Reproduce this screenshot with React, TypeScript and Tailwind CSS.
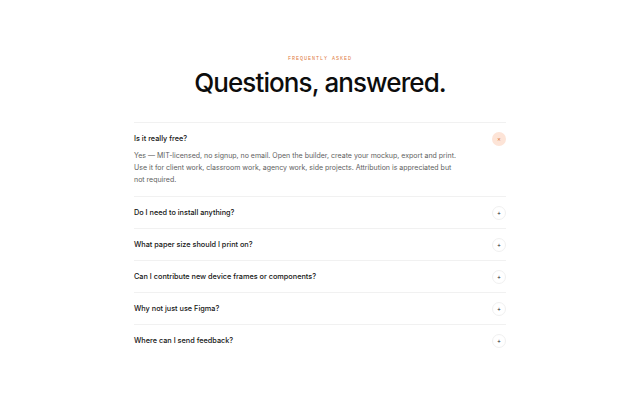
import { useState } from "react";

const faqs = [
  {
    q: "Is it really free?",
    a: "Yes — MIT-licensed, no signup, no email. Open the builder, create your mockup, export and print. Use it for client work, classroom work, agency work, side projects. Attribution is appreciated but not required.",
  },
  { q: "Do I need to install anything?", a: "" },
  { q: "What paper size should I print on?", a: "" },
  { q: "Can I contribute new device frames or components?", a: "" },
  { q: "Why not just use Figma?", a: "" },
  { q: "Where can I send feedback?", a: "" },
];

export default function App() {
  const [open, setOpen] = useState(0);

  return (
    <div className="min-h-screen bg-white font-['Inter',sans-serif] text-[#111]">
      <section className="mx-auto w-[372px] pt-[56px]">
        <p className="text-center font-['Liberation_Mono',monospace] text-[5px] leading-[7px] uppercase tracking-[0.2em] text-[#e07b45]">
          Frequently asked
        </p>
        <h2 className="mt-[4px] text-center text-[26px] font-medium leading-[32px] tracking-[-0.035em] text-[#0d0d0d]">
          Questions, answered.
        </h2>

        <div className="mt-[23px]">
          {faqs.map((f, i) => {
            const isOpen = open === i;
            return (
              <div key={f.q} className="border-t border-[#f1f1f1]">
                <button
                  type="button"
                  onClick={() => setOpen(isOpen ? -1 : i)}
                  className="flex h-[31px] w-full items-center justify-between text-left"
                >
                  <span className="pt-[1px] text-[7.3px] font-medium text-[#151515]">{f.q}</span>
                  <span
                    className={[
                      "grid h-[14px] w-[14px] place-items-center rounded-full text-[6px] leading-none",
                      isOpen
                        ? "bg-[#fde4d7] text-[#d9773f]"
                        : "border border-[#f0f0f0] text-[#222]",
                    ].join(" ")}
                  >
                    {isOpen ? "×" : "+"}
                  </span>
                </button>
                {isOpen && (
                  <p className="-mt-1 max-w-[322px] pb-[10px] text-[7px] leading-[12px] text-[#5e5e5e]">
                    {f.a}
                  </p>
                )}
              </div>
            );
          })}
        </div>
      </section>
    </div>
  );
}
